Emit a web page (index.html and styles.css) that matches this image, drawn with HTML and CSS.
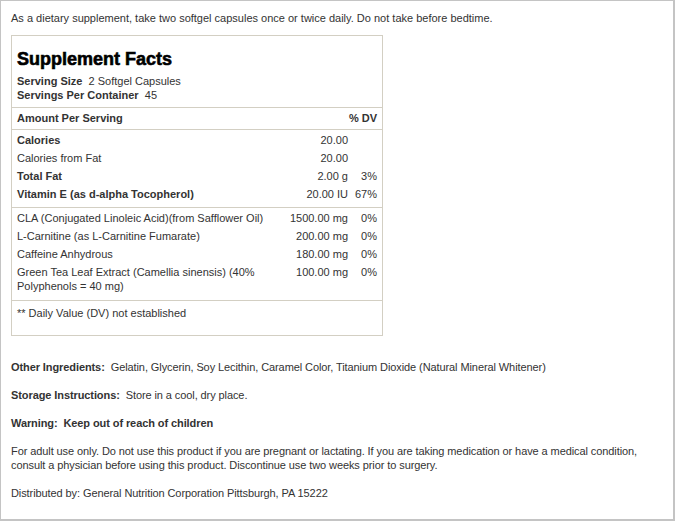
FILE: index.html
```html
<!DOCTYPE html>
<html>
<head>
<meta charset="utf-8">
<link rel="stylesheet" href="styles.css">
</head>
<body>
<div class="frame">
  <p class="intro">As a dietary supplement, take two softgel capsules once or twice daily. Do not take before bedtime.</p>
  <div class="facts">
    <h1 class="title">Supplement Facts</h1>
    <div class="serving first"><b>Serving Size</b>&nbsp; 2 Softgel Capsules</div>
    <div class="serving"><b>Servings Per Container</b>&nbsp; 45</div>
    <div class="section head">
      <div class="row"><span class="name">Amount Per Serving</span><span class="amt"></span><span class="dv">% DV</span></div>
    </div>
    <div class="section">
      <div class="row big"><span class="name">Calories</span><span class="amt">20.00</span><span class="dv"></span></div>
      <div class="row"><span class="name">Calories from Fat</span><span class="amt">20.00</span><span class="dv"></span></div>
      <div class="row big"><span class="name">Total Fat</span><span class="amt">2.00 g</span><span class="dv">3%</span></div>
      <div class="row big"><span class="name">Vitamin E (as d-alpha Tocopherol)</span><span class="amt">20.00 IU</span><span class="dv">67%</span></div>
    </div>
    <div class="section last">
      <div class="row"><span class="name">CLA (Conjugated Linoleic Acid)(from Safflower Oil)</span><span class="amt">1500.00 mg</span><span class="dv">0%</span></div>
      <div class="row"><span class="name">L-Carnitine (as L-Carnitine Fumarate)</span><span class="amt">200.00 mg</span><span class="dv">0%</span></div>
      <div class="row"><span class="name">Caffeine Anhydrous</span><span class="amt">180.00 mg</span><span class="dv">0%</span></div>
      <div class="row"><span class="name">Green Tea Leaf Extract (Camellia sinensis) (40% Polyphenols = 40 mg)</span><span class="amt">100.00 mg</span><span class="dv">0%</span></div>
    </div>
    <div class="foot">** Daily Value (DV) not established</div>
  </div>
  <p class="para gap"><b>Other Ingredients:</b>&nbsp; Gelatin, Glycerin, Soy Lecithin, Caramel Color, Titanium Dioxide (Natural Mineral Whitener)</p>
  <p class="para"><b>Storage Instructions:</b>&nbsp; Store in a cool, dry place.</p>
  <p class="para"><b>Warning:&nbsp; Keep out of reach of children</b></p>
  <p class="para">For adult use only. Do not use this product if you are pregnant or lactating. If you are taking medication or have a medical condition, consult a physician before using this product. Discontinue use two weeks prior to surgery.</p>
  <p class="para">Distributed by: General Nutrition Corporation Pittsburgh, PA 15222</p>
</div>
</body>
</html>
```

FILE: styles.css
```css
html, body {
  margin: 0;
  padding: 0;
  background: #fff;
}
body {
  font-family: "Liberation Sans", Arial, sans-serif;
  font-size: 11px;
  line-height: 14px;
  color: #333;
}
.frame {
  box-sizing: border-box;
  width: 675px;
  height: 521px;
  border: 1px solid #c4c4c4;
  border-right-width: 2px;
  border-bottom-width: 2px;
  padding: 10px 10px 0 10px;
  overflow: hidden;
}
.intro {
  margin: 0 0 10px 0;
}
.facts {
  width: 360px;
  border: 1px solid #d3cfc3;
  padding: 11px 5px 15px 5px;
}
.title {
  margin: 2px 0 0 0;
  font-size: 18px;
  line-height: 21px;
  font-weight: bold;
  color: #000;
  -webkit-text-stroke: 0.6px #000;
}
.serving.first {
  margin-top: 4px;
}
.serving b {
  font-weight: bold;
}
.section {
  border-top: 1px solid #d3cfc3;
  margin: 0 -5px;
  padding: 1px 5px 4px 5px;
}
.section.head {
  margin-top: 5px;
  padding: 3px 5px 4px 5px;
}
.section.head .row {
  padding: 0;
  font-weight: bold;
}
.section.last {
  padding-bottom: 5px;
}
.row {
  display: grid;
  grid-template-columns: 260px 1fr 29px;
  padding: 2px 0;
}
.row.big .name {
  font-weight: bold;
}
.amt, .dv {
  text-align: right;
  white-space: nowrap;
}
.foot {
  border-top: 1px solid #d3cfc3;
  margin: 0 -5px;
  padding: 5px 5px 0 5px;
}
.para {
  margin: 0 0 14px 0;
  letter-spacing: -0.09px;
}
.para.gap {
  margin-top: 24px;
}
```
